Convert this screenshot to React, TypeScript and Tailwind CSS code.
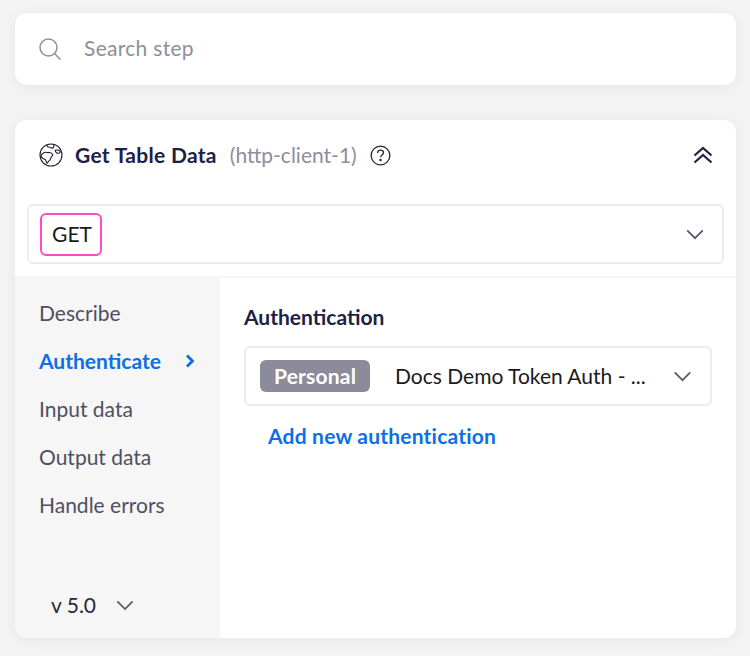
import React from "react";

const Chevron = ({ className }: { className: string }) => (
  <svg viewBox="0 0 20 12" fill="none" stroke="currentColor" strokeWidth="2" className={className}>
    <path d="M1.500 1.500 10 10l8.500-8.500" />
  </svg>
);

const navClass = "h-12 flex items-center text-[21px] text-[#4f4f63]";

export default function App() {
  return (
    <div className="w-[750px] h-[656px] bg-[#f3f3f3] pl-[15px] pr-[14px] pt-[13px] overflow-hidden font-['Lato','Noto_Sans',sans-serif]">
      <div className="h-[72px] bg-white rounded-xl shadow-[0_2px_14px_rgba(0,0,0,0.05)] flex items-center pl-[23px] gap-[22px]">
        <svg viewBox="0 0 24 24" fill="none" stroke="#8e8e9c" strokeWidth="1.500" className="w-6 h-6 shrink-0">
          <circle cx="10.500" cy="10.500" r="8.500" />
          <path d="m16.700 16.700 5.800 5.800" />
        </svg>
        <span className="text-[21px] text-[#8e8e9c] tracking-[0.3px] pb-[2px]">Search step</span>
      </div>

      <div className="mt-[35px] h-[518px] bg-white rounded-xl shadow-[0_2px_14px_rgba(0,0,0,0.05)] flex flex-col overflow-hidden">
        <div className="h-[84px] flex items-center pl-6 pr-[22px] pb-[14px] shrink-0">
          <svg viewBox="0 0 24 24" fill="none" stroke="#1f1f2e" strokeWidth="1.100" className="w-6 h-6 shrink-0">
            <circle cx="12" cy="12" r="11" />
            <path d="M1.800 13.500c.2-1.500 1-2.300 2-3 1.300-1 3-1.500 4.400-1 1 .3 1.300.2 2.300 0 1.500 0 2.700 1 3.200 2.300.3.800-.6 1.300-1.300 2-.8.800-.6 1.800-1.200 2.800-.7 1-1.800 1.500-2.300 2.700-.2.500-.5 1-1 .9-.8-.2-.6-2-1.200-3.200-.5-1-2-1-3-1.700-.9-.6-1.400-1.500-1.900-2.800Z" />
            <path d="M7.500 2c.5 1.200.8 2 2.300 2.200 1 .1 1.400-.2 2.200.5.800.8 1.800.5 2.500-.2.500-.5.300-1.500.2-3.300M16.200 7.300c1.300-.5 3.200-.5 4.800.7.500.6 0 1.500-.8 2-1 .5-2 .3-2.800-.3-.7-.6-1.200-1.400-1.200-2.400Z" />
          </svg>
          <span className="ml-3 text-[21px] font-bold text-[#1d2145] tracking-[0.3px]">Get Table Data</span>
          <span className="ml-[13px] text-[21px] text-[#8e8e9c]">(http-client-1)</span>
          <svg viewBox="0 0 22 22" fill="none" stroke="#2a2a3c" strokeWidth="1.400" className="ml-[13px] w-[21px] h-[21px]">
            <circle cx="11" cy="11" r="9.800" />
            <path d="M8 8.400c0-1.800 1.400-3 3.100-3 1.800 0 3 1.100 3 2.700 0 2.300-3 2.400-3 4.800" />
            <circle cx="11.100" cy="15.800" r="0.600" fill="#2a2a3c" />
          </svg>
          <svg viewBox="0 0 20 18" fill="none" stroke="#1d2145" strokeWidth="2.200" className="ml-auto mr-px w-5 h-[18px]">
            <path d="M1.500 9.500 10 2l8.500 7.500M1.500 16.500 10 9l8.500 7.500" />
          </svg>
        </div>

        <div className="mx-3 h-[60px] shrink-0 border-2 border-[#ececee] rounded-md flex items-center pl-[11px] pr-[17px]">
          <span className="w-[62px] h-[43px] pl-[2px] border-2 border-[#ff4ac0] rounded-md flex items-center justify-center text-[21px] text-[#1a1a1a]">GET</span>
          <Chevron className="ml-auto w-5 h-[11px] text-[#5b5b6e]" />
        </div>

        <div className="mt-3 flex-1 flex border-t-2 border-[#f5f5f5] min-h-0">
          <div className="w-[205px] bg-[#f6f6f7] pl-6 pt-[11px] flex flex-col shrink-0">
            <div className={navClass}>Describe</div>
            <div className="h-12 flex items-center text-[21px] font-bold text-[#0a6fe8]">
              Authenticate
              <svg viewBox="0 0 10 14" fill="none" stroke="currentColor" strokeWidth="2.800" className="ml-6 w-[10px] h-[14px]">
                <path d="m2 1.500 5.500 5.500L2 12.500" />
              </svg>
            </div>
            <div className={navClass}>Input data</div>
            <div className={navClass}>Output data</div>
            <div className={navClass}>Handle errors</div>
            <div className="mt-auto mb-[21px] ml-3 h-6 flex items-center text-[21px] text-[#26263a]">
              v 5.0
              <Chevron className="ml-5 w-[18px] h-[11px] text-[#5b5b6e]" />
            </div>
          </div>

          <div className="flex-1 pl-6 pr-6 pt-[26px]">
            <div className="text-[21px] leading-[26px] font-bold text-[#1d2145]">Authentication</div>
            <div className="mt-4 h-[60px] border-2 border-[#ececee] rounded-md flex items-center pl-[14px] pr-[18px]">
              <span className="w-[110px] h-8 rounded-md bg-[#8b8b99] text-white font-bold text-[21px] tracking-[0.2px] flex items-center justify-center">Personal</span>
              <span className="ml-[25px] text-[21px] text-[#1a1a1a] whitespace-nowrap">Docs Demo Token Auth - ...</span>
              <Chevron className="ml-auto w-[19px] h-[11px] text-[#5b5b6e]" />
            </div>
            <div className="mt-[17px] ml-6 text-[21px] font-bold text-[#0a6fe8] leading-[26px] tracking-[0.2px]">Add new authentication</div>
          </div>
        </div>
      </div>
    </div>
  );
}
